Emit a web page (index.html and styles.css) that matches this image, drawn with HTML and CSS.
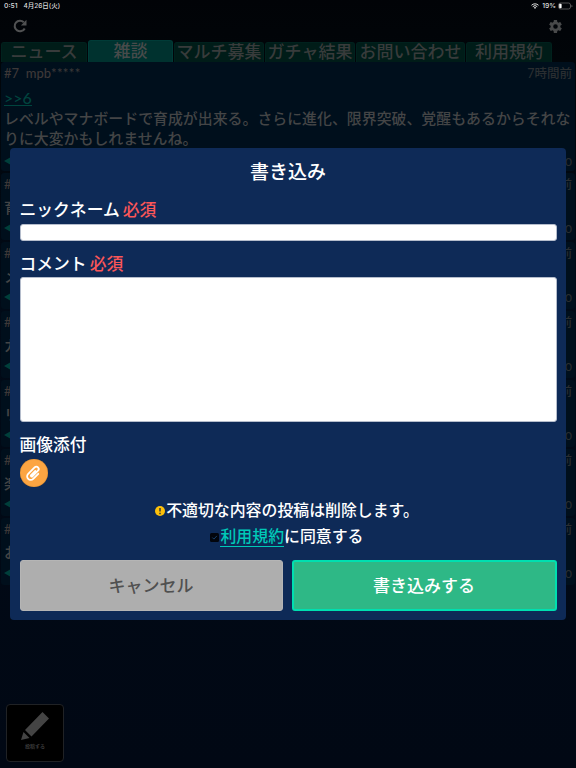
FILE: index.html
```html
<!DOCTYPE html>
<html lang="ja">

<head>
    <meta charset="utf-8">
    <title>書き込み</title>
    <link rel="stylesheet" href="styles.css">
</head>

<body>
    <div class="status">
        <span>0:51</span>
        <span class="date">4月26日(火)</span>
        <svg class="wifi" viewBox="0 0 16 12">
            <path d="M1 4.5a10 10 0 0 1 14 0M3.5 7.3a6.4 6.4 0 0 1 9 0" fill="none" stroke="#ddd" stroke-width="2" />
            <path d="M8 12L5.5 9.2a3.6 3.6 0 0 1 5 0z" fill="#ddd" />
        </svg>
        <span>19%</span>
        <svg class="battery" viewBox="0 0 15 8">
            <rect x=".5" y="1" width="12" height="6" rx="2" fill="none" stroke="#666" stroke-width=".8" />
            <rect x="1.2" y="1.7" width="2.4" height="4.6" rx=".8" fill="#fff" />
            <path d="M13.5 3v2.2q1-.3 1-1.1t-1-1.1" fill="#666" />
        </svg>
    </div>
    <div class="toolbar">
        <svg class="reload" viewBox="0 0 14 14">
            <path d="M11.7 9.4A5.3 5.3 0 1 1 10.8 3.3" fill="none" stroke="#505152" stroke-width="2.1" />
            <path d="M13.5 .8v5.6H7.9z" fill="#505152" />
        </svg>
        <svg class="gear" viewBox="2 2 20 20">
            <path fill="#48494a" d="M19.4 13a7.5 7.5 0 0 0 0-2l2.1-1.6c.2-.2.2-.4.1-.6l-2-3.5c-.1-.2-.4-.3-.6-.2l-2.5 1a7 7 0 0 0-1.7-1l-.4-2.6c0-.3-.2-.5-.5-.5h-4c-.2 0-.4.2-.5.5l-.4 2.6a7 7 0 0 0-1.7 1l-2.4-1c-.3-.1-.5 0-.6.2l-2 3.5c-.1.2-.1.5.1.6L4.6 11a7.5 7.5 0 0 0 0 2l-2.2 1.6c-.2.2-.2.4-.1.6l2 3.5c.1.2.4.3.6.2l2.4-1a7 7 0 0 0 1.7 1l.4 2.6c.1.3.3.5.5.5h4c.3 0 .5-.2.5-.5l.4-2.6a7 7 0 0 0 1.7-1l2.5 1c.2.1.5 0 .6-.2l2-3.5c.1-.2.1-.4-.1-.6zM12 15.5a3.5 3.5 0 1 1 0-7 3.5 3.5 0 0 1 0 7z" />
        </svg>
    </div>
    <div class="tabs">
        <span class="tab">ニュース</span>
        <span class="tab active">雑談</span>
        <span class="tab w5">マルチ募集</span>
        <span class="tab w5">ガチャ結果</span>
        <span class="tab w6">お問い合わせ</span>
        <span class="tab">利用規約</span>
    </div>
    <div class="posts">
        <div class="post first">
            <div class="head"><span>#7&nbsp; mpb<span class="stars">*****</span></span><span class="time">7時間前</span></div>
            <a class="anchor">&gt;&gt;6</a>
            <div class="text">レベルやマナボードで育成が出来る。さらに進化、限界突破、覚醒もあるからそれなりに大変かもしれませんね。</div>
            <div class="foot"><i class="reply"></i><span>0</span></div>
        </div>
        <div class="post">
            <div class="head"><span>#</span><span class="time">前</span></div>
            <div class="text">育</div>
            <div class="foot"><i class="reply"></i><span>0</span></div>
        </div>
        <div class="post">
            <div class="head"><span>#</span><span class="time">前</span></div>
            <div class="text">メ</div>
            <div class="foot"><i class="reply"></i><span>0</span></div>
        </div>
        <div class="post">
            <div class="head"><span>#</span><span class="time">前</span></div>
            <div class="text">ガ</div>
            <div class="foot"><i class="reply"></i><span>0</span></div>
        </div>
        <div class="post">
            <div class="head"><span>#</span><span class="time">前</span></div>
            <div class="text">リ</div>
            <div class="foot"><i class="reply"></i><span>0</span></div>
        </div>
        <div class="post">
            <div class="head"><span>#</span><span class="time">前</span></div>
            <div class="text">楽</div>
            <div class="foot"><i class="reply"></i><span>0</span></div>
        </div>
        <div class="post">
            <div class="head"><span>#</span><span class="time">前</span></div>
            <div class="text">お</div>
            <div class="foot"><i class="reply"></i><span>0</span></div>
        </div>
    </div>

    <div class="write">
        <svg viewBox="0 0 28 28">
            <path d="M21.5 0L28 6.5 10.5 24.5 4 18zM2.5 20L8.5 26 0 28z" fill="#444" />
        </svg>
        <span>投稿する</span>
    </div>

    <div class="modal">
        <div class="title">書き込み</div>
        <div class="label">ニックネーム<span class="must">必須</span></div>
        <input class="name" type="text">
        <div class="label comment-label">コメント<span class="must">必須</span></div>
        <textarea class="comment"></textarea>
        <div class="label image-label">画像添付</div>
        <div class="attach">
            <svg viewBox="0 0 24 24">
                <path transform="rotate(45 12 12)" d="M16.5 8v9a4.5 4.5 0 0 1-9 0V5.5a3 3 0 0 1 6 0V16a1.4 1.4 0 0 1-2.2 0V8" fill="none" stroke="#fff" stroke-width="2.3" stroke-linecap="round" />
            </svg>
        </div>
        <div class="notice">
            <svg viewBox="0 0 10 10">
                <circle cx="5" cy="5" r="5" fill="#fdc10a" />
                <path d="M5 2v3.5M5 6.8v1.4" stroke="#26303c" stroke-width="1.4" />
            </svg>
            <span>不適切な内容の投稿は削除します。</span>
        </div>
        <div class="notice agree">
            <svg viewBox="0 0 9 9">
                <rect width="9" height="9" rx="1.5" fill="#02050d" />
                <path d="M2.3 4.5l1.6 1.6 3-3.2" fill="none" stroke="#17406a" stroke-width="1" />
            </svg>
            <a class="terms">利用規約</a><span>に同意する</span>
        </div>
        <div class="buttons">
            <button class="cancel">キャンセル</button>
            <button class="submit">書き込みする</button>
        </div>
    </div>
</body>

</html>
```
FILE: styles.css
```css
html {
    --dimText: #444546;
    --teal: #00c9b7;
}

* {
    box-sizing: border-box;
}

body {
    margin: 0;
    height: 768px;
    overflow: hidden;
    position: relative;
    background: linear-gradient(#010307 0, #010509 62px, #010a17 300px, #010814 768px);
    color: var(--dimText);
    font-family: Lato, "Noto Sans CJK JP", sans-serif;
    font-weight: 500;
}

.status {
    display: flex;
    align-items: center;
    height: 12px;
    padding: 0 3px 0 4px;
    color: #ddd;
    font: 500 6.8px/12px Inter, "Noto Sans CJK JP", sans-serif;
}

.date {
    margin-left: 6px;
    margin-right: auto;
    font-size: 6.5px;
}

.wifi {
    width: 8px;
    height: 6px;
    margin-right: 3px;
}

.battery {
    width: 15px;
    height: 8px;
    margin-left: 2px;
}

.toolbar {
    display: flex;
    justify-content: space-between;
    align-items: center;
    height: 28px;
    padding: 0 14px 0 13px;
}

.reload {
    width: 14px;
    height: 14px;
}

.gear {
    width: 13px;
    height: 13px;
}

.tabs {
    display: flex;
    align-items: flex-end;
    gap: 1px;
    height: 22px;
    padding-left: 1px;
}

.tab {
    width: 86px;
    height: 20px;
    background: #001c18;
    border: 1px solid #00211d;
    border-bottom: 0;
    border-radius: 3px 3px 0 0;
    color: #383b3b;
    font-size: 17px;
    line-height: 17px;
    text-align: center;
    white-space: nowrap;
}

.tab.active {
    width: 85px;
    height: 22px;
    background: #00322f;
    border-color: #003b37;
    color: #484b4b;
    line-height: 19px;
}

.w5 {
    width: 90px;
}

.w6 {
    width: 109px;
}

.post {
    height: 67px;
    margin: 0 1px 2px;
    padding: 0 3px;
    background: #000f1c;
    border-radius: 3px;
}

.post.first {
    height: 109px;
}

.head {
    display: flex;
    justify-content: space-between;
    height: 23px;
    color: #3d3838;
    font-size: 13px;
    line-height: 23px;
}

.stars {
    letter-spacing: .4px;
}

.time {
    color: #2a2e31;
    font-size: 12.5px;
}

.anchor {
    display: block;
    width: 28px;
    height: 16px;
    margin: 5px 0 2px;
    border-bottom: 1px solid #00443e;
    color: #00443e;
    font-size: 16px;
    line-height: 15px;
}

.text {
    height: 22px;
    font-size: 15px;
    line-height: 22px;
    white-space: nowrap;
}

.first .text {
    height: 43px;
    margin-right: -3px;
    font-size: 14.92px;
    line-height: 20px;
    white-space: normal;
    word-break: break-all;
}

.foot {
    display: flex;
    justify-content: space-between;
    align-items: center;
    height: 20px;
    color: #292d30;
    font-size: 12px;
}

.reply {
    width: 0;
    height: 0;
    border: 4px solid transparent;
    border-left: 0;
    border-right: 7px solid #003f3b;
}

.write {
    position: absolute;
    left: 6px;
    top: 704px;
    width: 58px;
    height: 58px;
    padding-top: 7px;
    background: #000;
    border: 1px solid #202225;
    border-radius: 4px;
    color: #444;
    font-size: 5px;
    line-height: 10px;
    text-align: center;
}

.write svg {
    display: block;
    width: 28px;
    height: 28px;
    margin: 0 auto 1px;
}

.modal {
    position: absolute;
    left: 10px;
    top: 148px;
    width: 556px;
    height: 472px;
    padding: 0 9.5px;
    background: #0e2a57;
    border-radius: 4px;
    color: #fff;
}

.title {
    height: 48px;
    font-size: 19px;
    line-height: 48px;
    text-align: center;
}

.label {
    height: 28px;
    font-size: 16.8px;
    line-height: 28px;
}

.must {
    margin-left: 3px;
    color: #fb5658;
}

.name,
.comment {
    display: block;
    width: 100%;
    background: #fff;
    border: 1px solid #b5bdcc;
    border-radius: 3px;
    outline: 0;
    resize: none;
}

.name {
    height: 17px;
}

.comment-label {
    margin-top: 9px;
    height: 27px;
}

.comment {
    height: 145px;
}

.image-label {
    margin-top: 9px;
}

.attach {
    display: flex;
    align-items: center;
    justify-content: center;
    width: 28px;
    height: 28px;
    background: #fca542;
    border-radius: 50%;
    box-shadow: inset 0 0 1px #a76919;
}

.attach svg {
    width: 19px;
    height: 19px;
}

.notice {
    display: flex;
    align-items: center;
    justify-content: center;
    height: 26px;
    margin-top: 10px;
    padding-right: 2px;
    font-size: 15.9px;
    line-height: 26px;
}

.notice svg {
    width: 10px;
    height: 10px;
    margin-top: 2px;
    margin-right: 1px;
}

.agree {
    margin-top: 0;
}

.agree svg {
    width: 9px;
    height: 9px;
}

.terms {
    height: 22px;
    border-bottom: 1px solid var(--teal);
    color: var(--teal);
    line-height: 22px;
}

.buttons {
    display: flex;
    gap: 9px;
    margin-top: 11px;
}

button {
    flex: 1;
    height: 51px;
    padding: 0 0 3px;
    border-radius: 3px;
    font: inherit;
    font-size: 17px;
}

.cancel {
    background: #aeaeae;
    border: 1px solid #b5b5b5;
    color: #505050;
}

.submit {
    background: #2eb886;
    border: 2px solid #00dfb0;
    color: #fff;
}
```
